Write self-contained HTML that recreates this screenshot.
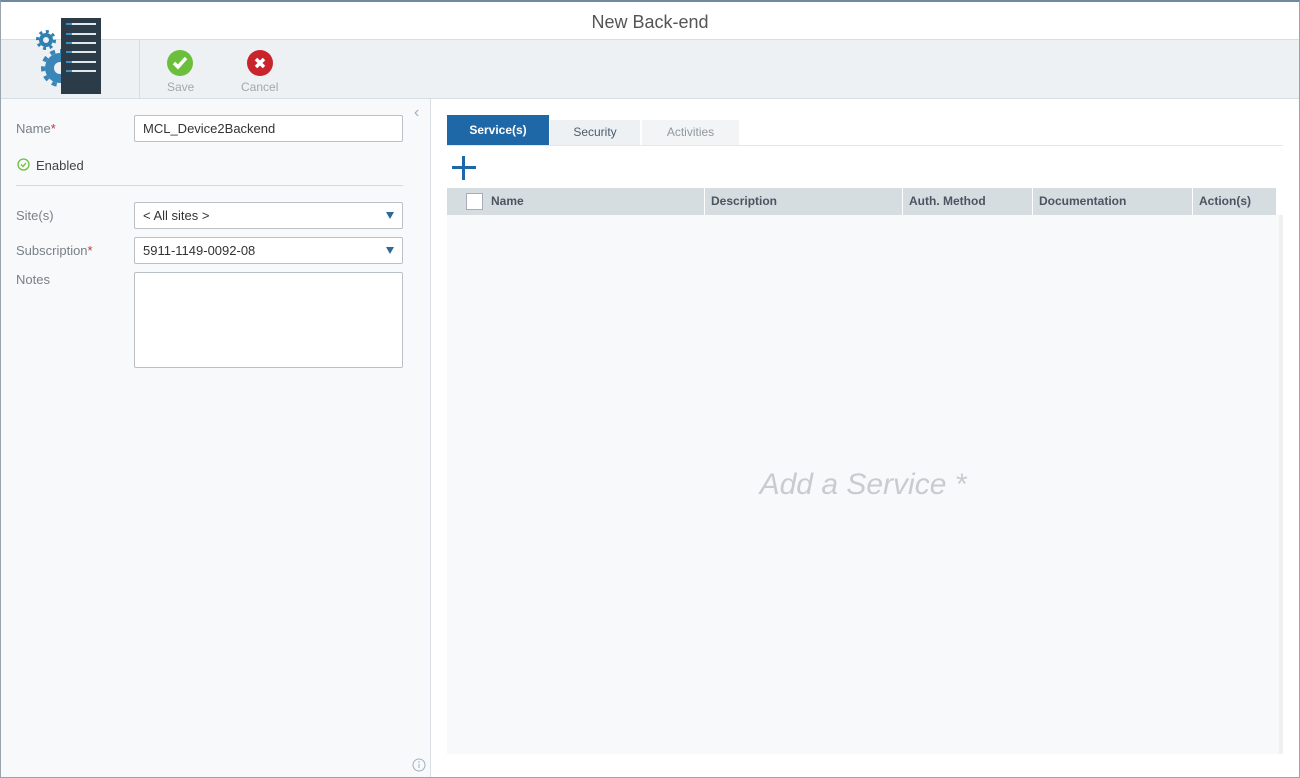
<!DOCTYPE html>
<html><head><style>
*{box-sizing:border-box;margin:0;padding:0}
body{width:1300px;height:778px;overflow:hidden;font-family:"Liberation Sans",sans-serif;background:#fff;position:relative;font-size:13px}
.abs{position:absolute}
.lbl{color:#7a8086;font-size:13px}
.inp{position:absolute;left:134px;width:269px;border:1px solid #b9c0c6;background:#fff;border-radius:2px;font-size:13px;color:#333;padding-left:8px}
.tri{position:absolute;right:8px;top:9px;width:0;height:0;border-left:4px solid transparent;border-right:4px solid transparent;border-top:7px solid #2d6a9a}
</style></head><body>
<div class="abs" style="left:0;top:0;width:1300px;height:778px;border:1px solid #9aa4ad;border-top:2px solid #6e8aa3"></div>
<div class="abs" style="left:0;top:12px;width:1300px;text-align:center;font-size:18px;color:#555">New Back-end</div>
<div class="abs" style="left:1px;top:39px;width:1298px;height:60px;background:#eef1f4;border-top:1px solid #d6dde3;border-bottom:1px solid #d6dde3"></div>
<div class="abs" style="left:139px;top:40px;width:1px;height:58px;background:#d6dde3"></div>
<svg class="abs" style="left:30px;top:16px" width="75" height="80" viewBox="0 0 75 80">
<circle cx="16" cy="24" r="7" fill="#2f7fb0"/><circle cx="16" cy="24" r="8.5" fill="none" stroke="#2f7fb0" stroke-width="3" stroke-dasharray="3 3.6"/><circle cx="16" cy="24" r="3" fill="#eef1f4"/>
<circle cx="30" cy="52" r="15" fill="#3b86b8"/><circle cx="30" cy="52" r="17" fill="none" stroke="#3b86b8" stroke-width="4" stroke-dasharray="5 5"/><circle cx="30" cy="52" r="6" fill="#eef1f4"/>
<rect x="31" y="2" width="40" height="76" fill="#2c3b48"/>
<g stroke="#dfe6ec" stroke-width="2"><line x1="38" y1="8" x2="66" y2="8"/><line x1="38" y1="18" x2="66" y2="18"/><line x1="38" y1="27" x2="66" y2="27"/><line x1="38" y1="36" x2="66" y2="36"/><line x1="38" y1="46" x2="66" y2="46"/><line x1="38" y1="55" x2="66" y2="55"/></g>
<g stroke="#3f8fc5" stroke-width="2"><line x1="36" y1="8" x2="42" y2="8"/><line x1="36" y1="18" x2="42" y2="18"/><line x1="36" y1="27" x2="42" y2="27"/><line x1="36" y1="36" x2="42" y2="36"/><line x1="36" y1="46" x2="42" y2="46"/><line x1="36" y1="55" x2="42" y2="55"/></g>
</svg>
<svg class="abs" style="left:167px;top:50px" width="26" height="26"><circle cx="13" cy="13" r="13" fill="#6cbf3c"/><path d="M7 13l4 4 8-9" stroke="#fff" stroke-width="3.5" fill="none"/></svg>
<div class="abs" style="left:167px;top:80px;font-size:12px;color:#a0a8ae">Save</div>
<svg class="abs" style="left:247px;top:50px" width="26" height="26"><circle cx="13" cy="13" r="13" fill="#c9232c"/><path d="M9 9l8 8M17 9l-8 8" stroke="#fff" stroke-width="3.5"/></svg>
<div class="abs" style="left:241px;top:80px;font-size:12px;color:#a0a8ae">Cancel</div>
<div class="abs" style="left:1px;top:99px;width:430px;height:678px;background:#f7f9fb;border-right:1px solid #d8dee3"></div>
<div class="abs" style="left:414px;top:104px;color:#9fb0bd;font-size:16px">&#8249;</div>
<div class="abs lbl" style="left:16px;top:121px">Name<span style="color:#c33">*</span></div>
<div class="inp" style="top:115px;height:27px;line-height:25px">MCL_Device2Backend</div>
<svg class="abs" style="left:17px;top:158px" width="13" height="13"><circle cx="6.5" cy="6.5" r="5.5" stroke="#6cbf3c" stroke-width="1.3" fill="none"/><path d="M4 6.5l2 2 3-3.5" stroke="#6cbf3c" stroke-width="1.3" fill="none"/></svg>
<div class="abs" style="left:36px;top:158px;color:#444">Enabled</div>
<div class="abs" style="left:16px;top:185px;width:387px;height:1px;background:#d4dadf"></div>
<div class="abs lbl" style="left:16px;top:208px">Site(s)</div>
<div class="inp" style="top:202px;height:27px;line-height:25px">&lt; All sites &gt;<div class="tri"></div></div>
<div class="abs lbl" style="left:16px;top:243px">Subscription<span style="color:#c33">*</span></div>
<div class="inp" style="top:237px;height:27px;line-height:25px">5911-1149-0092-08<div class="tri"></div></div>
<div class="abs lbl" style="left:16px;top:272px">Notes</div>
<div class="inp" style="top:272px;height:96px"></div>
<svg class="abs" style="left:412px;top:758px" width="14" height="14"><circle cx="7" cy="7" r="6" stroke="#9fb0bd" fill="none"/><line x1="7" y1="6" x2="7" y2="10" stroke="#9fb0bd"/><circle cx="7" cy="4" r=".8" fill="#9fb0bd"/></svg>
<div class="abs" style="left:447px;top:145px;width:836px;height:1px;background:#e3e8ec"></div>
<div class="abs" style="left:447px;top:115px;width:102px;height:30px;background:#1f68a8;color:#fff;font-weight:bold;font-size:12px;text-align:center;line-height:30px">Service(s)</div>
<div class="abs" style="left:550px;top:120px;width:90px;height:25px;background:#eef1f4;color:#4c5c6a;font-size:12px;text-align:center;line-height:25px">Security</div>
<div class="abs" style="left:642px;top:120px;width:97px;height:25px;background:#f2f4f6;color:#8f999f;font-size:12px;text-align:center;line-height:25px">Activities</div>
<div class="abs" style="left:452px;top:166px;width:24px;height:3px;background:#1f68a8"></div>
<div class="abs" style="left:462px;top:156px;width:3px;height:24px;background:#1f68a8"></div>
<div class="abs" style="left:447px;top:215px;width:832px;height:539px;background:#f8f9fb"></div>
<div class="abs" style="left:1279px;top:215px;width:4px;height:539px;background:#eef0f2"></div>
<div class="abs" style="left:447px;top:188px;width:829px;height:27px;background:#d6dde1;font-size:12px;font-weight:bold;color:#4a5560;line-height:27px">
<div class="abs" style="left:19px;top:5px;width:17px;height:17px;background:#fff;border:1px solid #aab"></div>
<div class="abs" style="left:44px">Name</div>
<div class="abs" style="left:257px;top:0;width:1px;height:27px;background:#fff"></div>
<div class="abs" style="left:264px">Description</div>
<div class="abs" style="left:455px;top:0;width:1px;height:27px;background:#fff"></div>
<div class="abs" style="left:462px">Auth. Method</div>
<div class="abs" style="left:585px;top:0;width:1px;height:27px;background:#fff"></div>
<div class="abs" style="left:592px">Documentation</div>
<div class="abs" style="left:745px;top:0;width:1px;height:27px;background:#fff"></div>
<div class="abs" style="left:752px">Action(s)</div>
</div>
<div class="abs" style="left:447px;top:468px;width:832px;text-align:center;font-size:30px;font-style:italic;color:#c8ccd0">Add a Service *</div>
</body></html>
